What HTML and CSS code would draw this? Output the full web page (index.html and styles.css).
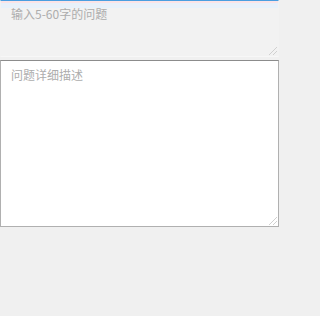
FILE: index.html
```html
<!DOCTYPE html>
<html lang="zh">
<head>
<meta charset="utf-8">
<link rel="stylesheet" href="styles.css">
</head>
<body>
<div class="form">
  <div class="field field-title">
    <textarea class="title-input" placeholder="输入5-60字的问题"></textarea>
  </div>
  <div class="field field-detail">
    <textarea class="detail-input" placeholder="问题详细描述"></textarea>
  </div>
</div>
</body>
</html>
```
FILE: styles.css
```css
html, body {
  margin: 0;
  padding: 0;
  background: #f0f0f0;
}
.form {
  display: flex;
  flex-direction: column;
  gap: 3px;
  width: 279px;
}
.field {
  position: relative;
}
.field::after {
  content: "";
  position: absolute;
  right: 2px;
  bottom: 2px;
  width: 8px;
  height: 8px;
  background: linear-gradient(135deg, transparent 0, transparent 45%, #d0d0d0 45%, #d0d0d0 55%, transparent 55%, transparent 70%, #d0d0d0 70%, #d0d0d0 80%, transparent 80%);
  pointer-events: none;
}
textarea {
  box-sizing: border-box;
  width: 279px;
  margin: 0;
  font-family: "Noto Sans CJK SC", "Noto Sans", sans-serif;
  font-size: 12px;
  line-height: 17px;
  color: #333;
  outline: none;
  display: block;
  resize: none;
}
textarea::placeholder {
  color: #adadad;
}
.title-input {
  height: 57px;
  padding: 4px 10px;
  border: 1px solid #f2f2f2;
  border-top-color: #4a9ee0;
  border-bottom-color: #f7f7f7;
  background: linear-gradient(to bottom, #fbe4e7 0, #fbe4e7 2px, #e8f1fa 2px, #e8f1fa 7px, #f2f2f2 7px);
}
.detail-input {
  height: 167px;
  padding: 5px 10px;
  border: 1px solid #b0b0b0;
  border-top-color: #8c8c8c;
  background: #ffffff;
}
```
